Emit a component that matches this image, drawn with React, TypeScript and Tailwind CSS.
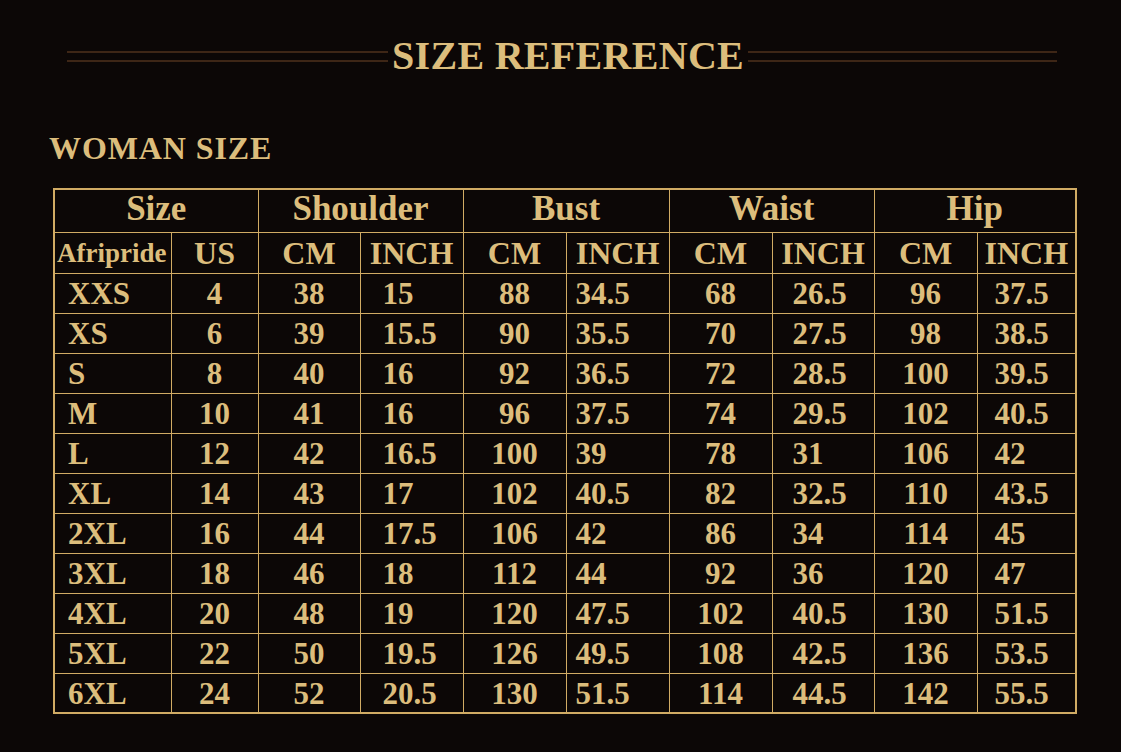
import React from "react";

const rows: [string, string, string, string, string, string, string, string, string, string][] = [
  ["XXS", "4", "38", "15", "88", "34.5", "68", "26.5", "96", "37.5"],
  ["XS", "6", "39", "15.5", "90", "35.5", "70", "27.5", "98", "38.5"],
  ["S", "8", "40", "16", "92", "36.5", "72", "28.5", "100", "39.5"],
  ["M", "10", "41", "16", "96", "37.5", "74", "29.5", "102", "40.5"],
  ["L", "12", "42", "16.5", "100", "39", "78", "31", "106", "42"],
  ["XL", "14", "43", "17", "102", "40.5", "82", "32.5", "110", "43.5"],
  ["2XL", "16", "44", "17.5", "106", "42", "86", "34", "114", "45"],
  ["3XL", "18", "46", "18", "112", "44", "92", "36", "120", "47"],
  ["4XL", "20", "48", "19", "120", "47.5", "102", "40.5", "130", "51.5"],
  ["5XL", "22", "50", "19.5", "126", "49.5", "108", "42.5", "136", "53.5"],
  ["6XL", "24", "52", "20.5", "130", "51.5", "114", "44.5", "142", "55.5"],
];

const cellAlign = [
  "text-left pl-[13px]",
  "text-center",
  "text-center",
  "text-left pl-[22px]",
  "text-center",
  "text-left pl-[9px]",
  "text-center",
  "text-left pl-[20px]",
  "text-center",
  "text-left pl-[17px]",
];

const widths = [117, 87, 102, 103, 103, 103, 103, 102, 103, 99];

export default function App() {
  return (
    <div
      className="w-[1121px] h-[752px] bg-[#0c0706] text-[#dcbd7c] overflow-hidden"
      style={{ fontFamily: '"Liberation Serif", "Times New Roman", serif' }}
    >
      <div className="flex items-center pl-[67px] pr-[64px] pt-[33px]">
        <div className="w-[321px] flex-none flex flex-col gap-[7px]">
          <div className="h-[2px] bg-[#3e2616]" />
          <div className="h-[2px] bg-[#3e2616]" />
        </div>
        <h1 className="px-[4px] text-[40px] leading-[46px] font-bold tracking-[0.3px]">
          SIZE REFERENCE
        </h1>
        <div className="flex-1 flex flex-col gap-[7px]">
          <div className="h-[2px] bg-[#3e2616]" />
          <div className="h-[2px] bg-[#3e2616]" />
        </div>
      </div>
      <h2 className="pl-[49px] mt-[49px] text-[32px] leading-[40px] font-bold tracking-[0.9px]">
        WOMAN SIZE
      </h2>
      <div className="pl-[53px] mt-[20px]">
        <table className="border-collapse border-2 border-[#d1ab64] table-fixed w-[1022px] font-bold">
          <colgroup>
            {widths.map((w, i) => (
              <col key={i} style={{ width: w }} />
            ))}
          </colgroup>
          <thead>
            <tr className="h-[43px]">
              {["Size", "Shoulder", "Bust", "Waist", "Hip"].map((h) => (
                <th
                  key={h}
                  colSpan={2}
                  className="border border-[#d1ab64] text-[35px] leading-[36px] font-bold pb-[4px] align-middle"
                >
                  {h}
                </th>
              ))}
            </tr>
            <tr className="h-[41px]">
              <th className="border border-[#d1ab64] text-[27px] leading-[30px] font-bold text-left pl-[2px] whitespace-nowrap">
                Afripride
              </th>
              <th className="border border-[#d1ab64] text-[32px] leading-[32px] font-bold">US</th>
              {[0, 1, 2, 3].map((i) => (
                <React.Fragment key={i}>
                  <th className="border border-[#d1ab64] text-[32px] leading-[32px] font-bold">CM</th>
                  <th className="border border-[#d1ab64] text-[32px] leading-[32px] font-bold">INCH</th>
                </React.Fragment>
              ))}
            </tr>
          </thead>
          <tbody>
            {rows.map((r, ri) => (
              <tr key={ri} className="h-[40px]">
                {r.map((c, ci) => (
                  <td
                    key={ci}
                    className={`border border-[#d1ab64] text-[31px] leading-[32px] align-middle pt-[2px] ${cellAlign[ci]}`}
                  >
                    {c}
                  </td>
                ))}
              </tr>
            ))}
          </tbody>
        </table>
      </div>
    </div>
  );
}
